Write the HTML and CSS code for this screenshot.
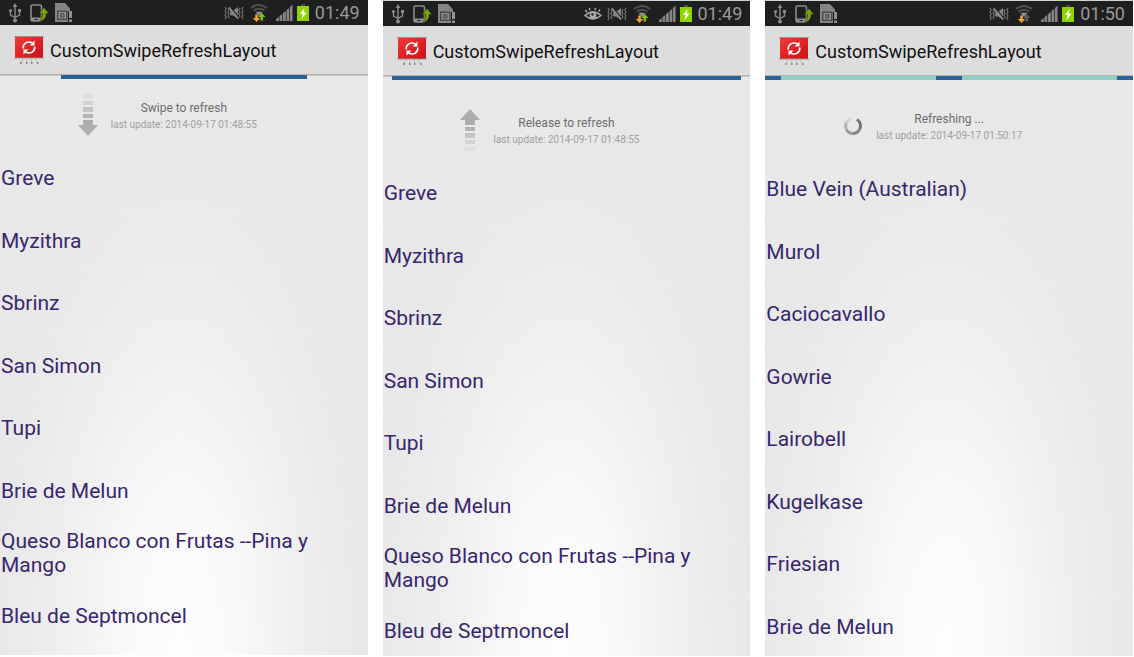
FILE: index.html
```
<!DOCTYPE html>
<html lang="en">
<head>
<meta charset="utf-8">
<meta name="viewport" content="width=device-width, initial-scale=1">
<title>CustomSwipeRefreshLayout</title>
<link rel="stylesheet" href="styles.css">
</head>
<body>
<svg class="sprite" aria-hidden="true">
  <defs>
    <linearGradient id="board" x1="0" y1="0" x2="1" y2="1">
      <stop offset="0" stop-color="#ee3c3c"/><stop offset=".5" stop-color="#e02226"/><stop offset="1" stop-color="#cc1015"/>
    </linearGradient>
  </defs>
  <symbol id="usb" viewBox="0 0 14 20">
    <path d="M7 3v14M7 14.500 2.500 12V8M7 14.500 11.500 12V8" fill="none" stroke="#8c8c8c" stroke-width="1.400"/>
    <path d="M7 0 9.300 4H4.700zM10 6h3v3h-3z" fill="#8c8c8c"/>
    <circle cx="2.500" cy="7.500" r="1.600" fill="#8c8c8c"/><circle cx="7" cy="17.500" r="2" fill="#8c8c8c"/>
  </symbol>
  <symbol id="device" viewBox="0 0 19 18">
    <rect x="1" y="1" width="10.500" height="16" rx="1.500" fill="none" stroke="#8c8c8c" stroke-width="1.600"/>
    <path d="M1 13.500h10.500V17H1z" fill="#8c8c8c"/><path d="M4.500 15.500h3" stroke="#222" />
    <path d="M14 3.500 19 9.500h-2.800c0 4.500-2 7-6.700 8 2-2 3-4 3-8H9z" fill="#77a50c" stroke="#1f1f1f" stroke-width=".5"/>
  </symbol>
  <symbol id="sim" viewBox="0 0 18 20">
    <path d="M0 0h10l5 5.500V8h-2v11H0z" fill="#858585"/>
    <path d="M2 7.500h10.500V17H2z" fill="#4a4a4a"/><path d="M3.500 9h7.500v6.500H3.500z" fill="#959595"/>
    <path d="M5.500 10.500h3.500v3.500H5.500z" fill="#777" stroke="#4a4a4a"/>
    <path d="M14 8h3v7h-3zM14 16.500h3V19h-3z" fill="#929292"/>
  </symbol>
  <symbol id="eye" viewBox="0 0 18 14">
    <path d="M1 8.500Q9 1 17 8.500 9 15.500 1 8.500zM3 5 1.300 3M6 3.200 5.200 1M11 3l.6-2M14.500 4.500l1.500-2" fill="none" stroke="#aaa" stroke-width="1.500"/>
    <circle cx="9" cy="8.500" r="3.400" fill="#aaa"/><circle cx="8.500" cy="7.500" r="1.200" fill="#222"/>
  </symbol>
  <symbol id="mute" viewBox="0 0 20 14">
    <path d="M1 1l1.200 2L1 5l1.200 2L1 9l1.200 2L1 13M4 2l1.200 2L4 6l1.200 2L4 10l1.200 2M16 2l-1.200 2L16 6l-1.200 2 1.200 2-1.200 2M19 1l-1.200 2L19 5l-1.200 2L19 9l-1.200 2 1.200 2" fill="none" stroke="#777" stroke-width="1.100"/>
    <path d="M6.300 4.500h3L14 1v12L9.300 9.500h-3z" fill="#858585"/>
    <path d="M6 .8 15 11.500" stroke="#222" stroke-width="1.300"/><path d="M4.800 1.200 14.200 12.500" stroke="#8c8c8c" stroke-width="1.500"/>
  </symbol>
  <symbol id="wifi" viewBox="0 0 18 18">
    <path d="M1 4Q9-2 17 4M3.500 6.800Q9 2.800 14.500 6.800" fill="none" stroke="#4f4f4f" stroke-width="2"/>
    <path d="M5.500 8.500Q9 6.500 12.500 8.500L9 12z" fill="#8c8c8c"/>
    <path d="M5.200 10.500h2.600V14h2.400l-3.700 4L2.800 14h2.400z" fill="#f2a12e"/>
  </symbol>
  <symbol id="upload" viewBox="0 0 18 18">
    <path d="M11.800 9 15.500 13h-2.400v3.500h-2.600V13H8.100z" fill="currentColor"/>
  </symbol>
  <symbol id="signal" viewBox="0 0 17 17">
    <path d="M0 17v-2l2.800-2v4zM3.500 17v-5l2.800-2v7zM7 17V9l2.800-2v10zM10.500 17V6l2.800-2v13zM14 17V3l2.500-2.500V17z" fill="#858585"/>
  </symbol>
  <symbol id="battery" viewBox="0 0 12 17">
    <path d="M4 0h4v2H4z" fill="#4a4a4a"/><path d="M0 2h12v15H0z" fill="#8fd400"/>
    <path d="M7.500 4 3 10h2.600L4.500 15.500 9.500 8.500H6.800z" fill="#fff"/>
  </symbol>
  <symbol id="logo" viewBox="0 0 30 28">
    <path d="M9 23 7 27M13 23l-.5 3.500M17 23l.5 3.500M21 23l2.500 4" stroke="#bbb"/>
    <path d="M6 27h1.500M12 27h1.500M17 27h1.500M23 27h1.500" stroke="#666" stroke-width="1.300"/>
    <path d="M1 1h28v21H1z" fill="url(#board)"/><path d="M0 .500h30M0 22h30" stroke="#9b9292"/>
    <path d="M9.200 12.500C8.800 7.500 13.500 4.500 18.500 7M20.800 10.500C21.200 15.500 16.500 18.500 11.500 16" fill="none" stroke="#fff" stroke-width="1.600"/>
    <path d="M20.500 4.500v5h-5zM9.500 18.500v-5h5z" fill="#fff"/>
  </symbol>
  <symbol id="arrow" viewBox="0 0 22 42">
    <path d="M6 0h10v4H6z" fill="#dedfe0"/><path d="M6 7h10v4H6z" fill="#d2d3d4"/><path d="M6 13h10v5H6z" fill="#c3c4c6"/>
    <path d="M6 20h10v4H6z" fill="#b3b4b6"/><path d="M6 26h10v5h5L11 42 1 31h5z" fill="#abadaf"/>
  </symbol>
  <symbol id="spinner" viewBox="0 0 18 18">
    <g fill="none" stroke-width="3">
      <path d="M13 2.500A7.500 7.500 0 0 1 15.500 12.500" stroke="#757575"/><path d="M15.500 12.500A7.500 7.500 0 0 1 9 16.500" stroke="#858585"/>
      <path d="M9 16.500A7.500 7.500 0 0 1 2.500 12.500" stroke="#999"/><path d="M2.500 12.500A7.500 7.500 0 0 1 2.500 5.500" stroke="#b4b4b4"/>
      <path d="M2.500 5.500A7.500 7.500 0 0 1 7 2" stroke="#d2d2d2"/>
    </g>
  </symbol>
</svg>

<main class="screens">
  <section class="phone phone--first">
    <header class="status">
      <svg class="usb"><use href="#usb"/></svg>
      <svg class="device"><use href="#device"/></svg>
      <svg class="sim"><use href="#sim"/></svg>
      <svg class="mute"><use href="#mute"/></svg>
      <svg class="wifi"><use href="#wifi"/><use class="upload-on" href="#upload"/></svg>
      <svg class="signal"><use href="#signal"/></svg>
      <svg class="battery"><use href="#battery"/></svg>
      <time class="clock">01:49</time>
    </header>
    <div class="appbar"><svg class="logo"><use href="#logo"/></svg><h1 class="title">CustomSwipeRefreshLayout</h1></div>
    <div class="content">
      <div class="progress"><span class="fill" style="width:67%"></span></div>
      <div class="refresh">
        <svg class="arrow"><use href="#arrow"/></svg>
        <div class="message"><p class="state">Swipe to refresh</p><p class="updated">last update: 2014-09-17 01:48:55</p></div>
      </div>
      <ul class="list">
        <li class="item">Greve</li><li class="item">Myzithra</li><li class="item">Sbrinz</li><li class="item">San Simon</li>
        <li class="item">Tupi</li><li class="item">Brie de Melun</li><li class="item">Queso Blanco con Frutas --Pina y Mango</li><li class="item">Bleu de Septmoncel</li>
      </ul>
    </div>
  </section>

  <section class="phone phone--release">
    <header class="status">
      <svg class="usb"><use href="#usb"/></svg>
      <svg class="device"><use href="#device"/></svg>
      <svg class="sim"><use href="#sim"/></svg>
      <svg class="eye"><use href="#eye"/></svg>
      <svg class="mute"><use href="#mute"/></svg>
      <svg class="wifi"><use href="#wifi"/><use class="upload-on" href="#upload"/></svg>
      <svg class="signal"><use href="#signal"/></svg>
      <svg class="battery"><use href="#battery"/></svg>
      <time class="clock">01:49</time>
    </header>
    <div class="appbar"><svg class="logo"><use href="#logo"/></svg><h1 class="title">CustomSwipeRefreshLayout</h1></div>
    <div class="content">
      <div class="progress"><span class="fill" style="width:95%"></span></div>
      <div class="refresh">
        <svg class="arrow arrow--up"><use href="#arrow"/></svg>
        <div class="message"><p class="state">Release to refresh</p><p class="updated">last update: 2014-09-17 01:48:55</p></div>
      </div>
      <ul class="list">
        <li class="item">Greve</li><li class="item">Myzithra</li><li class="item">Sbrinz</li><li class="item">San Simon</li>
        <li class="item">Tupi</li><li class="item">Brie de Melun</li><li class="item">Queso Blanco con Frutas --Pina y Mango</li><li class="item">Bleu de Septmoncel</li>
      </ul>
    </div>
  </section>

  <section class="phone phone--busy">
    <header class="status">
      <svg class="usb"><use href="#usb"/></svg>
      <svg class="device"><use href="#device"/></svg>
      <svg class="sim"><use href="#sim"/></svg>
      <svg class="mute"><use href="#mute"/></svg>
      <svg class="wifi"><use href="#wifi"/><use class="upload-off" href="#upload"/></svg>
      <svg class="signal"><use href="#signal"/></svg>
      <svg class="battery"><use href="#battery"/></svg>
      <time class="clock">01:50</time>
    </header>
    <div class="appbar"><svg class="logo"><use href="#logo"/></svg><h1 class="title">CustomSwipeRefreshLayout</h1></div>
    <div class="content">
      <div class="progress progress--busy"><span class="fill"></span><span class="fill"></span><span class="fill"></span></div>
      <div class="refresh">
        <svg class="spinner"><use href="#spinner"/></svg>
        <div class="message"><p class="state">Refreshing ...</p><p class="updated">last update: 2014-09-17 01:50:17</p></div>
      </div>
      <ul class="list">
        <li class="item">Blue Vein (Australian)</li><li class="item">Murol</li><li class="item">Caciocavallo</li><li class="item">Gowrie</li>
        <li class="item">Lairobell</li><li class="item">Kugelkase</li><li class="item">Friesian</li><li class="item">Brie de Melun</li>
      </ul>
    </div>
  </section>
</main>
</body>
</html>
```

FILE: styles.css
```
* { box-sizing: border-box; }
body { margin: 0; background: #fff; font-family: Roboto, "Liberation Sans", sans-serif; }
h1, p, ul { margin: 0; padding: 0; font-weight: 400; }
svg { display: block; flex: none; }
.sprite { position: absolute; width: 0; height: 0; }

.screens {
  display: grid;
  grid-template-columns: repeat(3, 1fr);
  grid-template-rows: minmax(0, 1fr);
  gap: 15px;
  height: 100vh;
  padding: 0 1px 1px 0;
}
.phone {
  display: flex;
  flex-direction: column;
  min-height: 0;
  overflow: hidden;
  border-top: 1px solid #ccd6d3;
}
.phone--first { border-top: 0; margin-bottom: 1px; }

.status {
  display: flex;
  flex: none;
  align-items: center;
  height: 25px;
  padding: 0 8px;
  background: #1f1f1f;
}
.usb { width: 14px; height: 20px; }
.device { width: 19px; height: 18px; margin-left: 8px; }
.sim { width: 18px; height: 20px; margin-left: 6px; }
.eye { width: 18px; height: 14px; margin-left: auto; }
.mute { width: 20px; height: 14px; margin-left: auto; }
.eye + .mute { margin-left: 5px; }
.wifi { width: 18px; height: 18px; margin-left: 6px; }
.upload-on { color: #7fc400; }
.upload-off { color: #5b5b5b; }
.signal { width: 17px; height: 17px; margin-left: 8px; }
.battery { width: 12px; height: 17px; margin-left: 4px; }
.clock { margin-left: 6px; color: #999; font-size: 18px; line-height: 24px; }

.appbar {
  display: flex;
  flex: none;
  align-items: center;
  gap: 6px;
  height: 50px;
  padding: 1px 14px 0;
  background: #ddd;
  border-bottom: 1px solid #b4b4b4;
}
.logo { width: 30px; height: 28px; }
.title { padding-top: 2px; color: #111; font-size: 18px; line-height: 24px; }

.content {
  flex: 1;
  min-height: 0;
  overflow: hidden;
  background: radial-gradient(ellipse 52% 86% at 49% 98%, #fdfdfd 0%, #f9f9f9 30%, #efefef 62%, #eaeaea 85%, #e8e8e8 100%);
}
.progress { display: flex; justify-content: center; height: 4px; background: linear-gradient(#c8c8c8 1px, transparent 1px); }
.fill { background: #2b6194; }
.progress--busy { justify-content: space-between; background: #93cbc7; }
.progress--busy .fill { width: 16px; }
.progress--busy .fill:nth-child(2) { width: 26px; }

.refresh {
  display: grid;
  grid-template-columns: 1fr auto 1fr;
  align-items: center;
  column-gap: 12px;
  height: 64px;
  margin-top: 4px;
}
.phone--release .refresh { margin-top: 18px; }
.phone--busy .refresh { margin-top: 14px; }
.arrow { width: 22px; height: 42px; justify-self: end; }
.arrow--up { transform: rotate(180deg); }
.spinner { width: 18px; height: 18px; margin-right: 2px; justify-self: end; }
.message { padding-top: 2px; text-align: center; }
.state { color: #6d6d6d; font-size: 12px; line-height: 18px; }
.updated { color: #a0a0a0; font-size: 10px; line-height: 16px; }

.list { display: grid; grid-auto-rows: 1fr; min-height: 500px; list-style: none; }
.item {
  display: flex;
  align-items: center;
  padding: 1px 48px 0 1px;
  border-bottom: 1px solid rgba(255, 255, 255, .15);
  color: #37266f;
  font-size: 21px;
  line-height: 24px;
}
```
